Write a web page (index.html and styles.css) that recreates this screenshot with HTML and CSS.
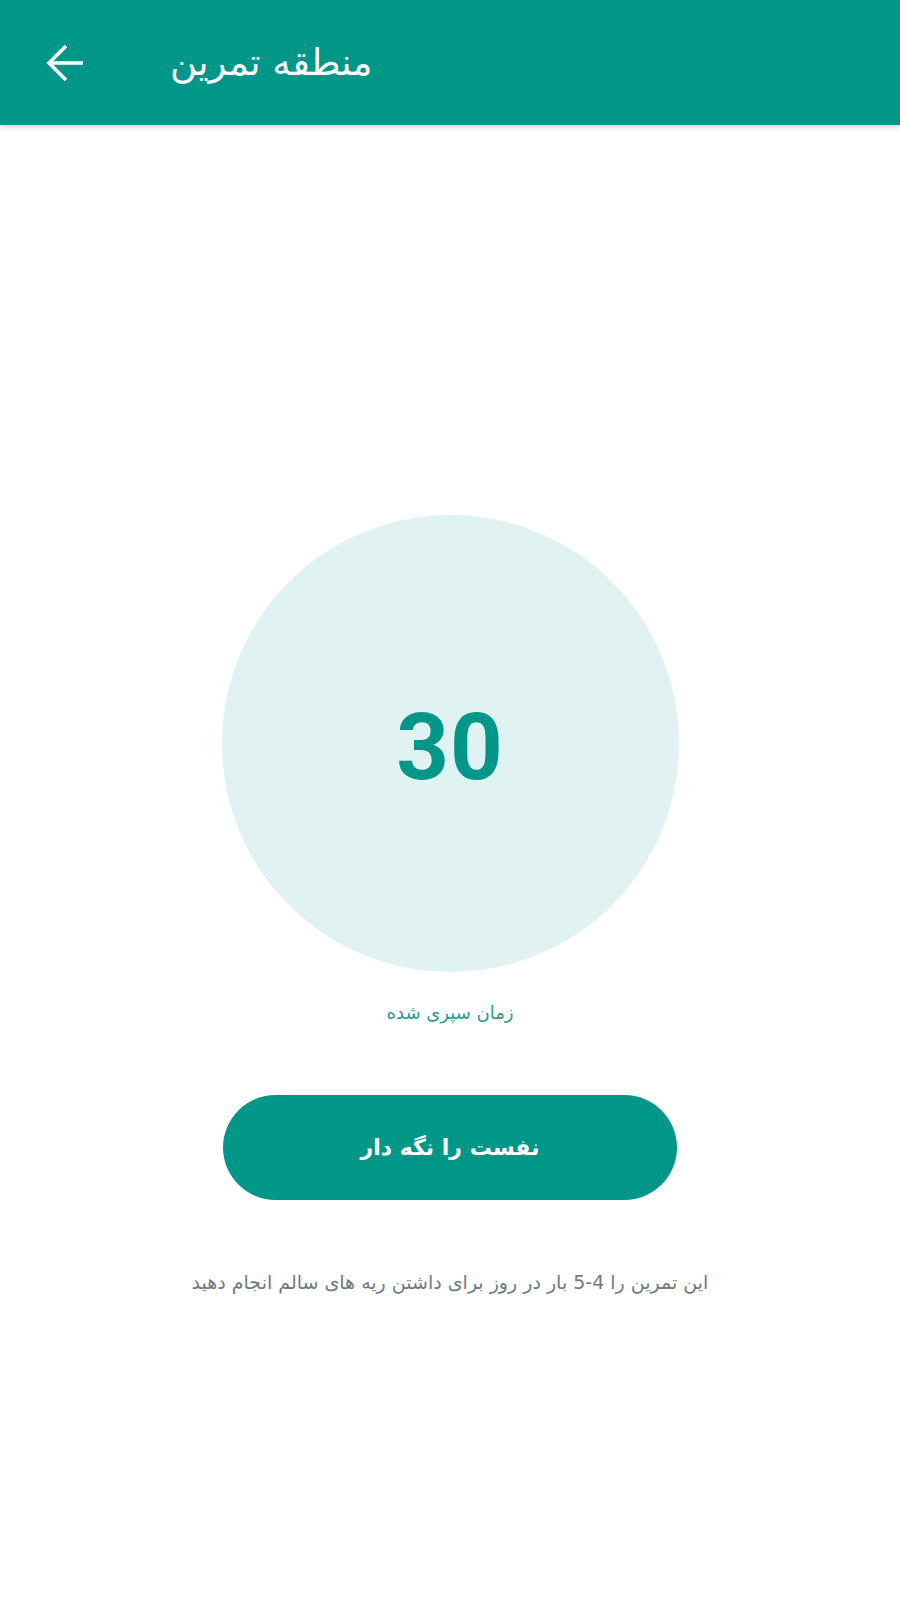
FILE: index.html
```html
<!DOCTYPE html>
<html lang="fa">
<head>
<meta charset="utf-8">
<link rel="stylesheet" href="styles.css">
</head>
<body>
<header class="toolbar">
  <button class="back" aria-label="back">
    <svg viewBox="0 0 40 40" width="40" height="40"><path d="M38 20H4M21 3L4 20l17 17" fill="none" stroke="#fff" stroke-width="3.6" stroke-linecap="butt" stroke-linejoin="miter"/></svg>
  </button>
  <h1 class="title" dir="rtl">منطقه تمرین</h1>
</header>
<main class="content">
  <div class="timer"><span class="count">30</span></div>
  <div class="label" dir="rtl">زمان سپری شده</div>
  <button class="hold" dir="rtl">نفست را نگه دار</button>
  <p class="hint" dir="rtl">این تمرین را 4-5 بار در روز برای داشتن ریه های سالم انجام دهید</p>
</main>
</body>
</html>
```
FILE: styles.css
```css
html, body {
  margin: 0;
  padding: 0;
  background: #ffffff;
}
body {
  font-family: "DejaVu Sans", "Noto Sans", sans-serif;
  width: 900px;
  min-height: 1600px;
}
.toolbar {
  height: 125px;
  background: #009688;
  display: flex;
  align-items: center;
  box-shadow: 0 2px 5px rgba(0,0,0,0.18);
  position: relative;
}
.back {
  background: none;
  border: none;
  padding: 0;
  margin-left: 45px;
  width: 40px;
  height: 40px;
  display: flex;
}
.title {
  margin: 0 0 0 85px;
  color: #ffffff;
  font-size: 37px;
  font-weight: normal;
  line-height: 1;
}
.content {
  display: flex;
  flex-direction: column;
  align-items: center;
}
.timer {
  margin-top: 390px;
  width: 457px;
  height: 457px;
  border-radius: 50%;
  background: #e0f2f1;
  display: flex;
  align-items: center;
  justify-content: center;
}
.count {
  font-family: Roboto, "Liberation Sans", sans-serif;
  font-weight: 700;
  font-size: 92px;
  letter-spacing: 1px;
  color: #009688;
  line-height: 1;
  padding-top: 8px;
}
.label {
  margin-top: 30px;
  color: #2a9a8d;
  font-size: 18px;
}
.hold {
  margin-top: 72px;
  width: 454px;
  height: 105px;
  border: none;
  border-radius: 53px;
  background: #009688;
  color: #ffffff;
  font-family: "DejaVu Sans", sans-serif;
  font-weight: 700;
  font-size: 22px;
}
.hint {
  margin: 71px 0 0;
  color: #6e7a80;
  font-size: 19px;
}
```
